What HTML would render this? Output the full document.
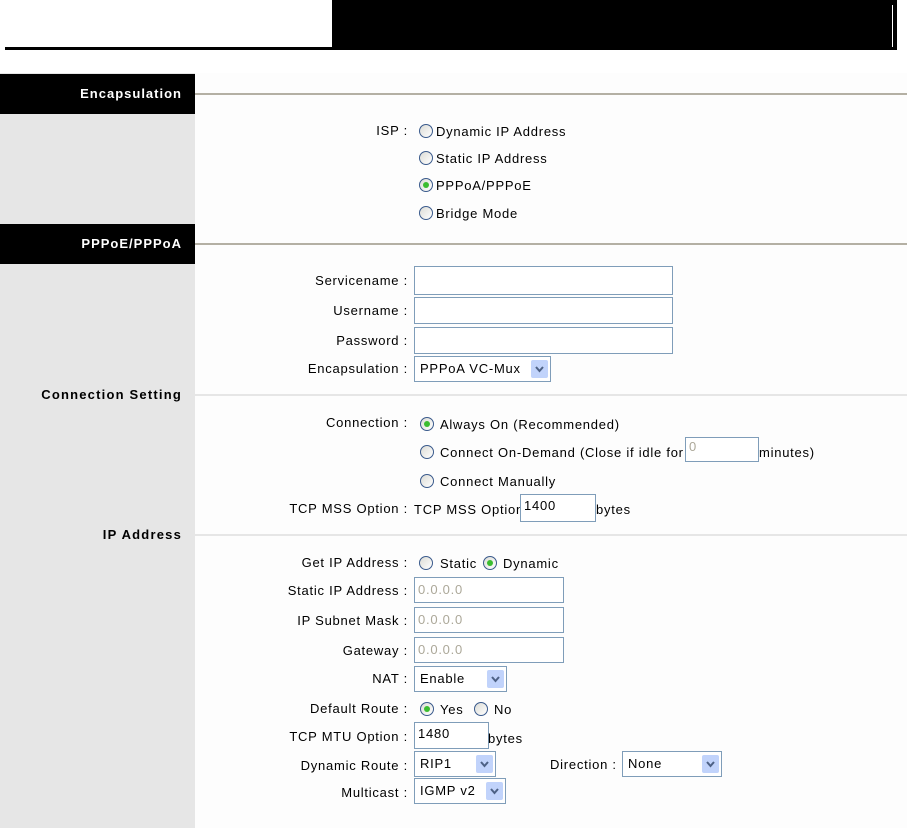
<!DOCTYPE html>
<html><head><meta charset="utf-8"><style>
*{margin:0;padding:0;box-sizing:border-box}
body{width:907px;height:828px;background:#fff;position:relative;overflow:hidden;font-family:"Liberation Sans",Arial,sans-serif;font-size:13px;letter-spacing:0.75px;color:#000}
.a{position:absolute}
.t{position:absolute;line-height:14px;white-space:nowrap}
.l{position:absolute;line-height:14px;white-space:nowrap;right:499px;text-align:right}
.bar{position:absolute;left:0;width:195px;height:40px;background:#000;color:#fff;font-weight:bold;text-align:right;padding-right:13px;line-height:40px;letter-spacing:1px}
.hl{position:absolute;left:195px;right:0;height:2px;background:#b4b0a4}
.ll{position:absolute;left:195px;right:0;height:2px;background:#e6e6e6}
.sec{position:absolute;right:725px;font-weight:bold;line-height:14px;white-space:nowrap;letter-spacing:1.2px}
.r{position:absolute;width:14px;height:14px;border-radius:50%;border:1px solid #3a5a8c;background:linear-gradient(135deg,#dcdcd6,#fff)}
.r.on::after{content:"";position:absolute;left:3px;top:3px;width:6px;height:6px;border-radius:50%;background:#3bbd30}
.in{position:absolute;border:1px solid #7f9db9;background:#fff;height:26px;line-height:24px;padding-left:3px}
.g{color:#aca899}
.sel{position:absolute;border:1px solid #7f9db9;background:#fff;height:26px;line-height:24px;padding-left:5px}
.sel::after{content:"";position:absolute;right:2px;top:3px;width:17px;height:18px;background:#c1d3fb;border-radius:2px}
.sel svg{position:absolute;right:6px;top:9px;z-index:1}
</style></head><body>
<div class="a" style="left:5px;top:47px;width:330px;height:3px;background:#000"></div>
<div class="a" style="left:332px;top:0;width:565px;height:50px;background:#000"></div>
<div class="a" style="left:892px;top:5px;width:1px;height:42px;background:#fff"></div>

<div class="a" style="left:0;top:73px;width:195px;height:755px;background:#e6e6e6"></div>
<div class="a" style="left:195px;top:73px;width:712px;height:755px;background:#fdfdfd"></div>

<div class="bar" style="top:74px">Encapsulation</div>
<div class="hl" style="top:93px"></div>
<div class="l" style="top:124px">ISP :</div>
<div class="r" style="left:419px;top:124px"></div><div class="t" style="left:436px;top:125px">Dynamic IP Address</div>
<div class="r" style="left:419px;top:151px"></div><div class="t" style="left:436px;top:152px">Static IP Address</div>
<div class="r on" style="left:419px;top:178px"></div><div class="t" style="left:436px;top:179px">PPPoA/PPPoE</div>
<div class="r" style="left:419px;top:206px"></div><div class="t" style="left:436px;top:207px">Bridge Mode</div>

<div class="bar" style="top:224px">PPPoE/PPPoA</div>
<div class="hl" style="top:243px"></div>
<div class="l" style="top:274px">Servicename :</div><div class="in" style="left:414px;top:266px;width:259px;height:29px"></div>
<div class="l" style="top:304px">Username :</div><div class="in" style="left:414px;top:297px;width:259px;height:27px"></div>
<div class="l" style="top:334px">Password :</div><div class="in" style="left:414px;top:327px;width:259px;height:27px"></div>
<div class="l" style="top:362px">Encapsulation :</div>
<div class="sel" style="left:414px;top:356px;width:137px">PPPoA VC-Mux<svg width="9" height="7" viewBox="0 0 9 7"><path d="M1 1L4.5 5L8 1" stroke="#4d6185" stroke-width="2" fill="none"/></svg></div>

<div class="sec" style="top:388px">Connection Setting</div>
<div class="ll" style="top:394px"></div>
<div class="l" style="top:416px">Connection :</div>
<div class="r on" style="left:420px;top:417px"></div><div class="t" style="left:440px;top:418px">Always On (Recommended)</div>
<div class="r" style="left:420px;top:445px"></div><div class="t" style="left:440px;top:446px">Connect On-Demand (Close if idle for</div>
<div class="in g" style="left:685px;top:437px;width:74px;height:25px;line-height:18px">0</div>
<div class="t" style="left:759px;top:446px">minutes)</div>
<div class="r" style="left:420px;top:474px"></div><div class="t" style="left:440px;top:475px">Connect Manually</div>
<div class="l" style="top:502px">TCP MSS Option :</div>
<div class="t" style="left:414px;top:503px">TCP MSS Option</div>
<div class="in" style="left:520px;top:494px;width:76px;height:28px;line-height:22px">1400</div>
<div class="t" style="left:596px;top:503px">bytes</div>

<div class="sec" style="top:528px">IP Address</div>
<div class="ll" style="top:534px"></div>
<div class="l" style="top:556px">Get IP Address :</div>
<div class="r" style="left:419px;top:556px"></div><div class="t" style="left:440px;top:557px">Static</div>
<div class="r on" style="left:483px;top:556px"></div><div class="t" style="left:503px;top:557px">Dynamic</div>
<div class="l" style="top:584px">Static IP Address :</div><div class="in g" style="left:414px;top:577px;width:150px">0.0.0.0</div>
<div class="l" style="top:614px">IP Subnet Mask :</div><div class="in g" style="left:414px;top:607px;width:150px">0.0.0.0</div>
<div class="l" style="top:644px">Gateway :</div><div class="in g" style="left:414px;top:637px;width:150px">0.0.0.0</div>
<div class="l" style="top:672px">NAT :</div>
<div class="sel" style="left:414px;top:666px;width:93px">Enable<svg width="9" height="7" viewBox="0 0 9 7"><path d="M1 1L4.5 5L8 1" stroke="#4d6185" stroke-width="2" fill="none"/></svg></div>
<div class="l" style="top:702px">Default Route :</div>
<div class="r on" style="left:420px;top:702px"></div><div class="t" style="left:440px;top:703px">Yes</div>
<div class="r" style="left:474px;top:702px"></div><div class="t" style="left:494px;top:703px">No</div>
<div class="l" style="top:730px">TCP MTU Option :</div>
<div class="in" style="left:414px;top:722px;width:75px;height:27px;line-height:22px">1480</div>
<div class="t" style="left:488px;top:732px">bytes</div>
<div class="l" style="top:759px">Dynamic Route :</div>
<div class="sel" style="left:414px;top:751px;width:82px">RIP1<svg width="9" height="7" viewBox="0 0 9 7"><path d="M1 1L4.5 5L8 1" stroke="#4d6185" stroke-width="2" fill="none"/></svg></div>
<div class="t" style="left:550px;top:758px">Direction :</div>
<div class="sel" style="left:622px;top:751px;width:100px">None<svg width="9" height="7" viewBox="0 0 9 7"><path d="M1 1L4.5 5L8 1" stroke="#4d6185" stroke-width="2" fill="none"/></svg></div>
<div class="l" style="top:786px">Multicast :</div>
<div class="sel" style="left:414px;top:778px;width:92px">IGMP v2<svg width="9" height="7" viewBox="0 0 9 7"><path d="M1 1L4.5 5L8 1" stroke="#4d6185" stroke-width="2" fill="none"/></svg></div>
</body></html>
